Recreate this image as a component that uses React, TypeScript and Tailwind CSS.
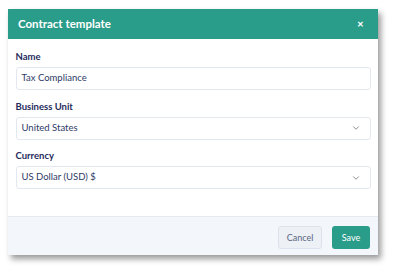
import { ChevronDown } from "lucide-react";

const font = { fontFamily: "Lato, 'Open Sans', sans-serif" };

function Field({ label, value, select }: { label: string; value: string; select?: boolean }) {
  return (
    <div className="flex flex-col gap-[4px]">
      <label className="text-[9.5px] font-bold leading-[12px] text-[#1f2b5c]">{label}</label>
      <div className="flex h-[23px] items-center justify-between rounded-[3px] border border-[#e3e7ee] bg-white pl-[5px] pr-[9px]">
        <span className="text-[9.5px] text-[#2e3a66]">{value}</span>
        {select && <ChevronDown className="h-[10px] w-[10px] text-[#666]" strokeWidth={1.75} />}
      </div>
    </div>
  );
}

export default function App() {
  return (
    <div className="h-[274px] w-[395px] bg-white pl-[8px] pt-[9px]" style={font}>
      <div className="flex w-[370px] flex-col bg-white shadow-[3px_4px_6px_rgba(0,0,0,0.4)]">
        <div className="flex h-[30px] items-center justify-between bg-[#2a9c8a] pl-[10px] pr-[14px]">
          <span className="text-[11.5px] font-bold text-white">Contract template</span>
          <span className="text-[8px] font-black leading-none text-white">✕</span>
        </div>
        <div className="flex flex-col gap-[10.5px] px-[7.5px] pb-[27px] pt-[12px]">
          <Field label="Name" value="Tax Compliance" />
          <Field label="Business Unit" value="United States" select />
          <Field label="Currency" value="US Dollar (USD) $" select />
        </div>
        <div className="flex h-[39px] items-start justify-end gap-[10px] border-t border-[#e6eaf0] bg-[#f3f6fa] pr-[8px] pt-[9px]">
          <button className="h-[23px] w-[44px] rounded-[3px] border border-[#dde3ec] bg-[#edf1f6] text-[9px] text-[#5a6680]">Cancel</button>
          <button className="h-[23px] w-[38px] rounded-[3px] bg-[#2a9c8a] text-[9px] text-white">Save</button>
        </div>
      </div>
    </div>
  );
}
